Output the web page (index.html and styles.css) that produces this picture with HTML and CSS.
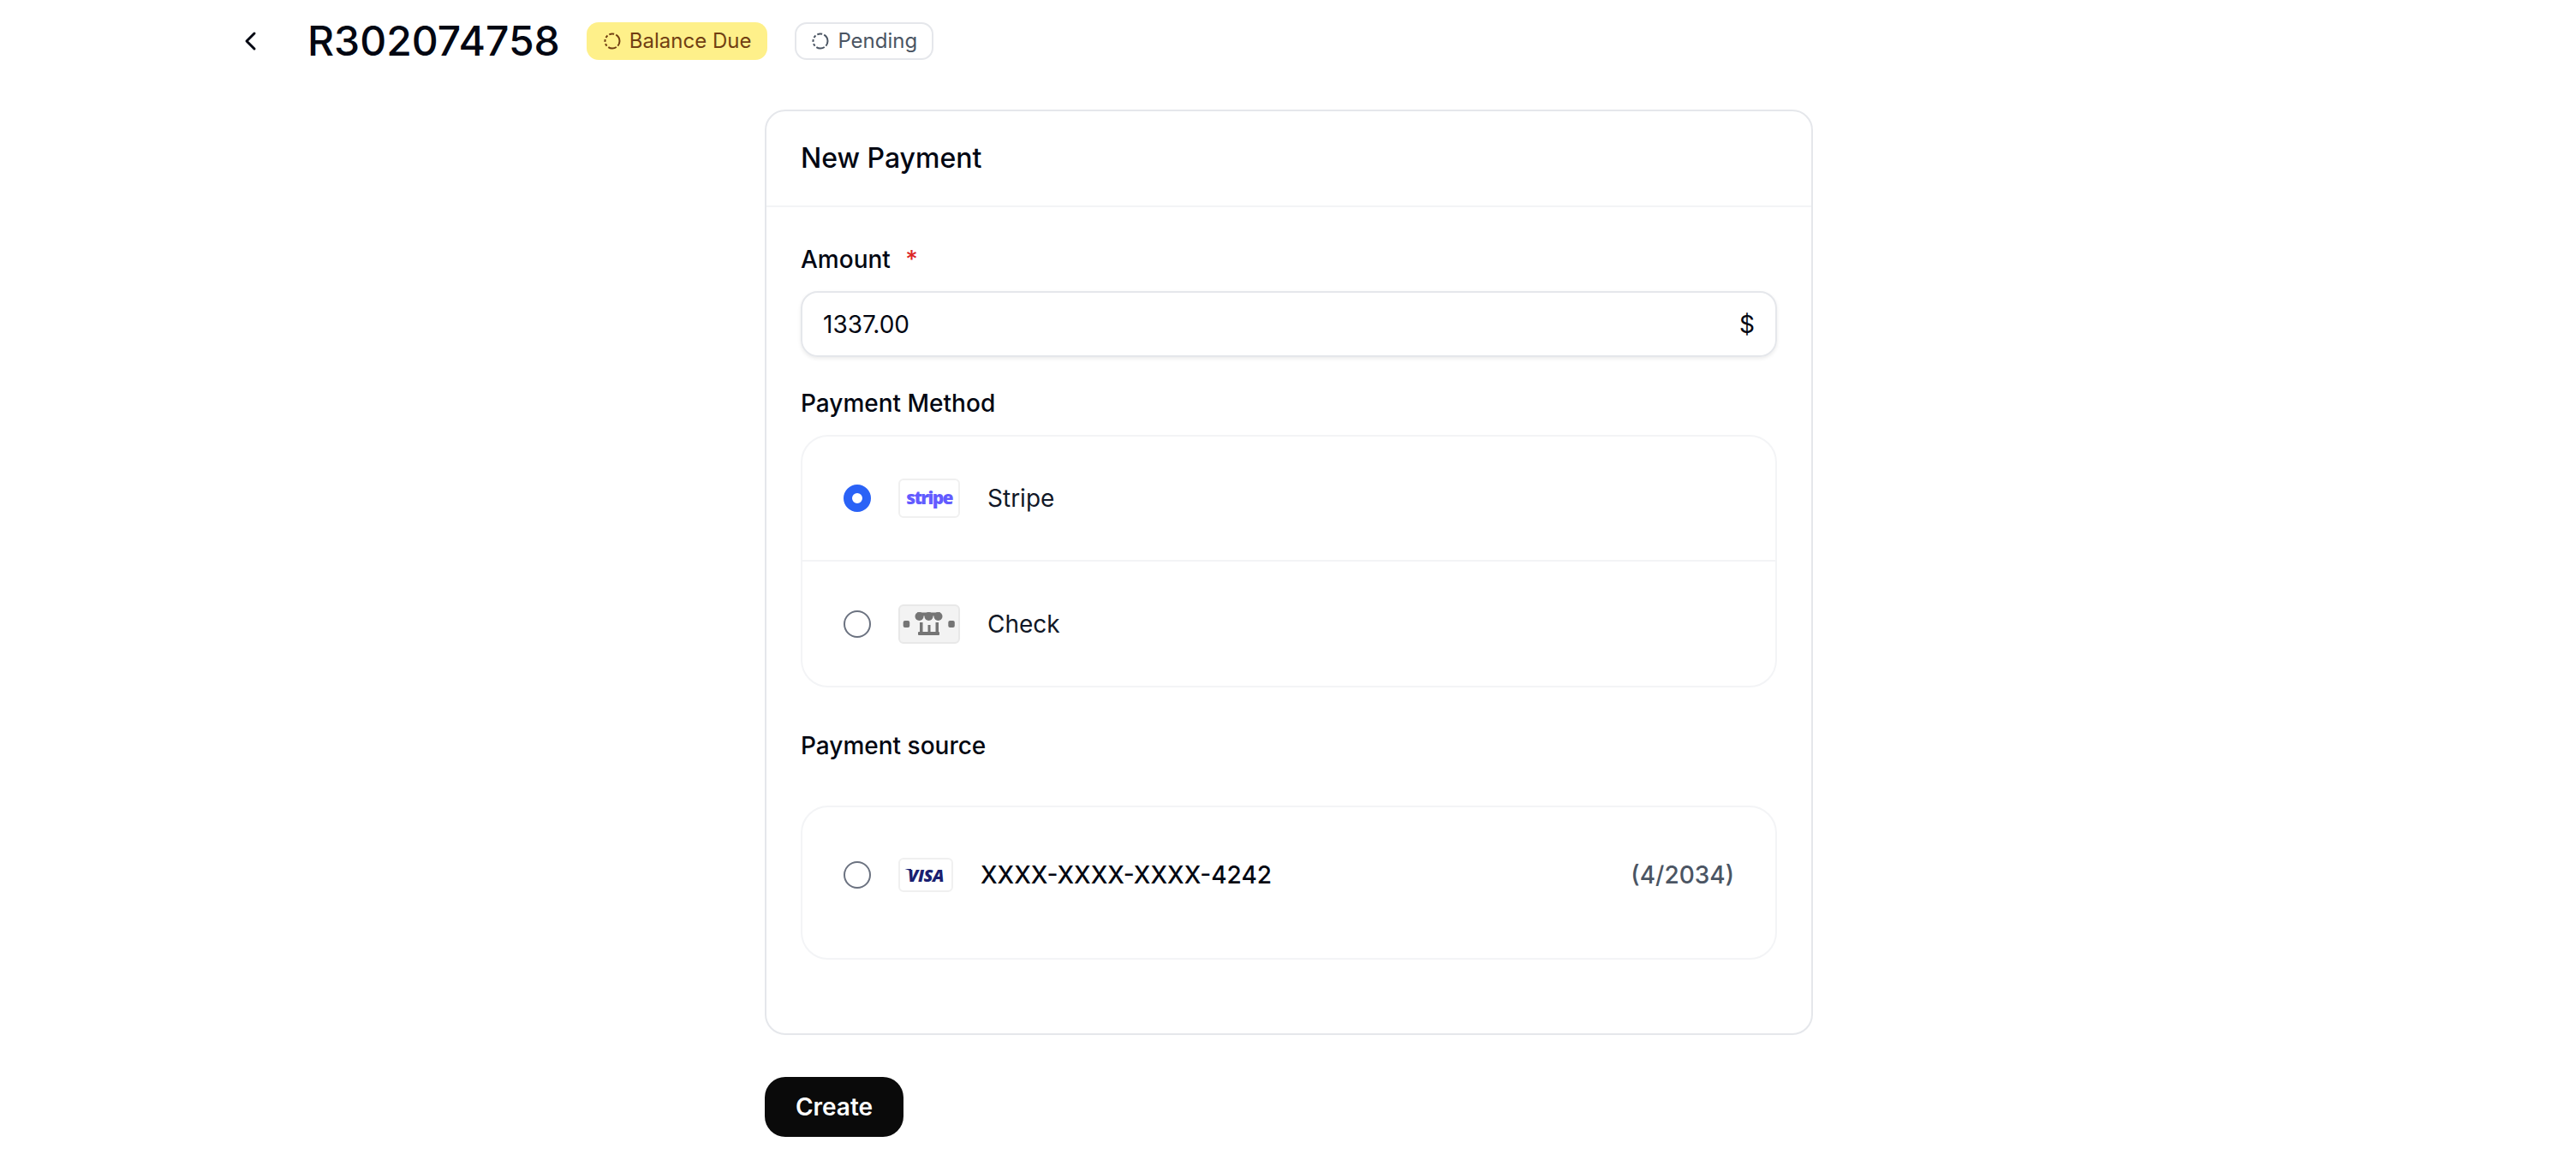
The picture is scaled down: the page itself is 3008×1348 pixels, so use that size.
FILE: index.html
```html
<!DOCTYPE html>
<html lang="en">
<head>
<meta charset="utf-8">
<title>New Payment</title>
<link rel="stylesheet" href="styles.css">
</head>
<body>
<div class="page">
  <header class="topbar">
    <button class="back" aria-label="Back">
      <svg width="44" height="44" viewBox="0 0 44 44" fill="none"><path d="M27 13 L18 22 L27 31" stroke="#030712" stroke-width="3" stroke-linecap="round" stroke-linejoin="round"/></svg>
    </button>
    <h1 class="title">R302074758</h1>
    <div class="badges">
      <span class="badge badge-due">
        <svg class="badge-icon" viewBox="0 0 20 20" fill="none"><circle cx="10" cy="10" r="8.5" stroke="currentColor" stroke-width="2" stroke-dasharray="6 2.2 10 2.2 3 2.2 3 2.2 3 2.2" stroke-linecap="butt"/></svg>
        Balance Due
      </span>
      <span class="badge badge-pending">
        <svg class="badge-icon" viewBox="0 0 20 20" fill="none"><circle cx="10" cy="10" r="8.5" stroke="currentColor" stroke-width="2" stroke-dasharray="6 2.2 10 2.2 3 2.2 3 2.2 3 2.2" stroke-linecap="butt"/></svg>
        Pending
      </span>
    </div>
  </header>

  <main class="content">
    <section class="card">
      <h2 class="card-title">New Payment</h2>
      <div class="card-body">
        <label class="label label-amount">Amount <span class="req">*</span></label>
        <div class="input">
          <span>1337.00</span>
          <span>$</span>
        </div>

        <div class="label label-method">Payment Method</div>
        <div class="group">
          <div class="row row-method row-divided">
            <span class="radio radio-on"></span>
            <span class="logo logo-stripe">stripe</span>
            <span class="row-text">Stripe</span>
          </div>
          <div class="row row-method">
            <span class="radio"></span>
            <span class="logo logo-check">
              <svg width="68" height="42" viewBox="0 0 68 42" fill="#757575">
                <rect x="3.7" y="17" width="7.5" height="8" rx="2"/>
                <rect x="56.3" y="17" width="7.5" height="8" rx="2"/>
                <rect x="20" y="7.5" width="27" height="4"/>
                <circle cx="22.5" cy="12" r="5"/>
                <circle cx="33.5" cy="12" r="5"/>
                <circle cx="44.5" cy="12" r="5"/>
                <rect x="23" y="19" width="3.5" height="12"/>
                <rect x="32.5" y="22" width="3" height="9"/>
                <rect x="41.5" y="19" width="3.5" height="12"/>
                <rect x="21" y="30" width="25" height="4" rx="1"/>
              </svg>
            </span>
            <span class="row-text">Check</span>
          </div>
        </div>

        <div class="label label-source">Payment source</div>
        <div class="group">
          <div class="row row-source">
            <span class="radio"></span>
            <span class="logo logo-visa"><span class="visa-text">VISA</span></span>
            <span class="card-number">XXXX-XXXX-XXXX-4242</span>
            <span class="expiry">(4/2034)</span>
          </div>
        </div>
      </div>
    </section>
    <button class="create">Create</button>
  </main>
</div>
</body>
</html>
```

FILE: styles.css
```css
* { box-sizing: border-box; }
html, body { margin: 0; padding: 0; background: #fff; }
body {
  font-family: Inter, "Liberation Sans", sans-serif;
  color: #030712;
  height: 1348px;
  overflow: hidden;
}
.page { display: flex; flex-direction: column; }

.topbar {
  display: flex;
  align-items: center;
  height: 95px;
  padding: 0 0 0 270px;
  margin-bottom: 33px;
}
.back {
  width: 44px; height: 44px; padding: 0; border: 0; background: none;
  margin-right: 45px;
  display: flex;
}
.title {
  margin: 0 31px 0 0;
  font-size: 48px;
  line-height: 64px;
  font-weight: 550;
}
.badges { display: flex; gap: 32px; }
.badge {
  display: inline-flex;
  align-items: center;
  gap: 10px;
  height: 44px;
  padding: 0 19px 0 20px;
  border-radius: 14px;
  font-size: 24px;
  line-height: 36px;
  font-weight: 400;
}
.badge-icon { width: 20px; height: 20px; flex: none; }
.badge-due { background: #fef08a; color: #713f12; }
.badge-pending { background: #fff; color: #4b5563; border: 2px solid #e5e7eb; padding: 0 17px 0 18px; }

.content { width: 1224px; margin-left: 893px; display: flex; flex-direction: column; align-items: flex-start; }

.card {
  width: 100%;
  height: 1081px;
  border: 2px solid #e5e7eb;
  border-radius: 24px;
  background: #fff;
}
.card-title {
  margin: 0;
  height: 112px;
  padding: 0 40px 2px;
  display: flex;
  align-items: center;
  font-size: 32px;
  font-weight: 500;
  border-bottom: 2px solid #f3f4f6;
}
.card-body { padding: 0 40px; display: flex; flex-direction: column; }

.label { font-size: 28px; line-height: 40px; font-weight: 500; }
.label-amount { margin-top: 41px; margin-bottom: 17px; }
.label-method { margin-top: 34px; margin-bottom: 17px; }
.label-source { margin-top: 48px; margin-bottom: 50px; }
.req { color: #dc2626; margin-left: 10px; }

.input {
  height: 77px;
  border: 2px solid #e5e7eb;
  border-radius: 20px;
  box-shadow: 0 2px 4px rgba(0,0,0,0.08);
  padding: 0 24px;
  display: flex;
  align-items: center;
  justify-content: space-between;
  font-size: 28px;
}

.group { border: 2px solid #f3f4f6; border-radius: 32px; display: flex; flex-direction: column; }
.row { display: flex; align-items: center; padding: 0 48px; }
.row-method { height: 145px; }
.row-divided { border-bottom: 2px solid #f3f4f6; height: 146px; }
.row-source { height: 176px; padding-bottom: 18px; }

.radio {
  width: 32px; height: 32px; flex: none;
  border-radius: 50%;
  border: 2px solid #6b7280;
  background: #fff;
  margin-right: 32px;
}
.radio-on { border: 10px solid #2a62f6; }

.logo {
  display: flex;
  align-items: center;
  justify-content: center;
  flex: none;
  width: 72px;
  height: 46px;
  border: 2px solid #f0f0f0;
  border-radius: 6px;
  background: #fff;
}
.logo-stripe {
  font-family: "Open Sans", Inter, sans-serif;
  font-weight: 800;
  font-size: 21px;
  letter-spacing: -1.7px;
  color: #635bff;
  padding-bottom: 2px;
}
.logo-check { background: #f3f3f3; border-color: #e8e8e8; }
.logo-visa { width: 64px; height: 40px; }
.visa-text {
  position: relative;
  font-family: "Open Sans", Inter, sans-serif;
  font-weight: 800;
  font-style: italic;
  font-size: 20px;
  letter-spacing: -0.5px;
  color: #1a1f71;
}
.visa-text::before {
  content: "";
  position: absolute;
  left: -5px;
  top: 6px;
  width: 9px;
  height: 3px;
  background: #1a1f71;
  clip-path: polygon(0 0, 100% 0, 100% 100%);
}
.row-text { margin-left: 32px; font-size: 28px; color: #111827; }
.card-number { margin-left: 32px; font-size: 28px; font-weight: 500; flex: 1; }
.expiry { font-size: 28px; font-weight: 500; color: #4b5563; }

.create {
  margin-top: 49px;
  width: 162px;
  height: 70px;
  border: 0;
  border-radius: 24px;
  background: #0a0a0a;
  color: #fff;
  font-family: inherit;
  font-size: 28px;
  font-weight: 600;
  padding: 0;
}
```
